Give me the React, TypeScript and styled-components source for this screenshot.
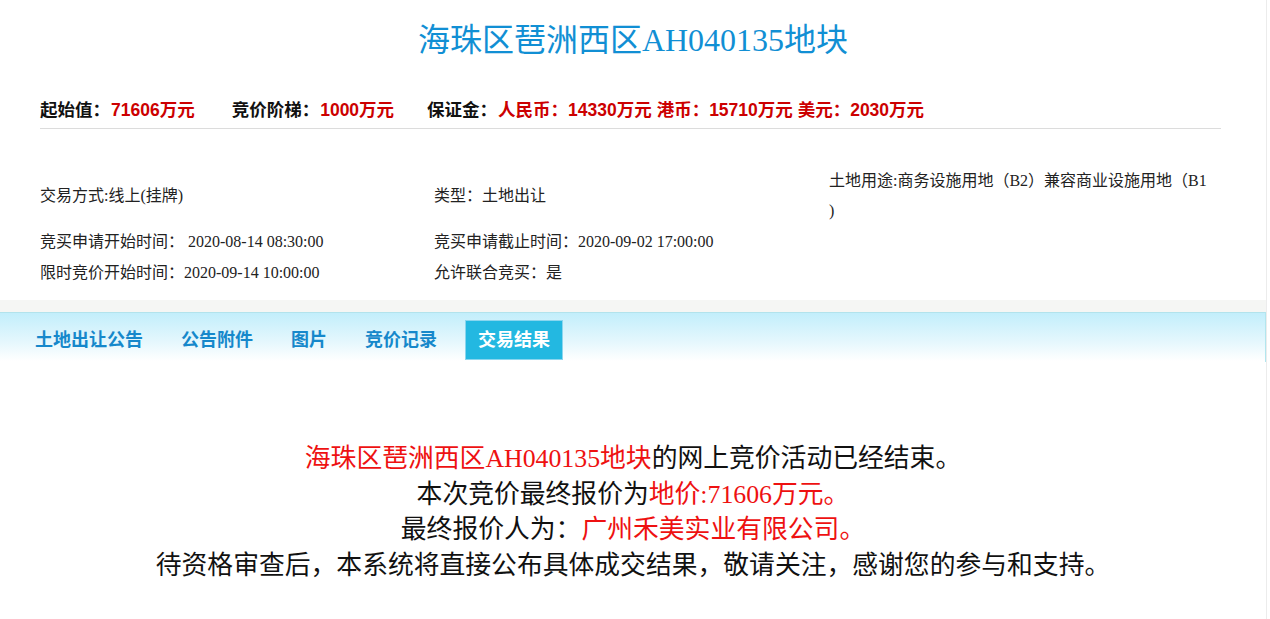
import React from "react";
import styled, { createGlobalStyle } from "styled-components";

const GlobalStyle = createGlobalStyle`
  html, body {
    margin: 0;
    padding: 0;
    background: #ffffff;
  }
  body {
    font-family: "Liberation Serif", "Noto Sans CJK SC", serif;
    color: #222;
  }
`;

const SERIF = `"Liberation Serif", "Noto Sans CJK SC", serif`;
const SANS = `"Liberation Sans", "Noto Sans CJK SC", sans-serif`;

const Page = styled.div`
  width: 1267px;
  border-right: 1px solid #ececec;
  min-height: 619px;
  box-sizing: border-box;
`;

const Title = styled.h1`
  margin: 0;
  padding-top: 16px;
  font-family: ${SERIF};
  font-size: 32px;
  line-height: 48px;
  font-weight: normal;
  color: #118fd4;
  text-align: center;
`;

const PriceRow = styled.div`
  display: flex;
  align-items: center;
  margin: 34px 45px 0 40px;
  padding-bottom: 6px;
  border-bottom: 1px solid #dcdcdc;
  font-family: ${SANS};
  font-size: 17.5px;
  line-height: 24px;
  font-weight: bold;
`;

const PriceGroup = styled.div<{ $gap?: number }>`
  display: flex;
  margin-right: ${(p) => p.$gap ?? 32}px;
`;

const PriceLabel = styled.span`
  color: #111;
  margin-right: 1px;
`;

const PriceValue = styled.span`
  color: #cc0000;
  white-space: pre;
`;

const DetailTable = styled.div`
  display: grid;
  grid-template-columns: 394px 395px 393px;
  margin: 37px 0 0 40px;
  font-family: ${SERIF};
  font-size: 16px;
  color: #222;
`;

const DetailCell = styled.div<{ $tall?: boolean }>`
  display: flex;
  align-items: center;
  height: ${(p) => (p.$tall ? "60px" : "31px")};
  line-height: 30px;
  white-space: pre;
`;

const GrayBand = styled.div`
  height: 12px;
  margin-top: 12px;
  background: #f5f6f4;
`;

const TabBar = styled.div`
  display: flex;
  align-items: flex-start;
  padding: 7px 0 0 22px;
  height: 42px;
  border-top: 1px solid #b2e3ec;
  border-right: 1px solid #b2e6ee;
  background: linear-gradient(#c2eefb 0px, #e4f7fd 28px, #ffffff 48px);
`;

const Tab = styled.div<{ $active?: boolean }>`
  height: 40px;
  line-height: 38px;
  box-sizing: border-box;
  padding: 0 12px;
  margin-right: 12px;
  margin-left: ${(p) => (p.$active ? "3px" : "0")};
  font-family: ${SANS};
  font-size: 18px;
  font-weight: 600;
  color: ${(p) => (p.$active ? "#ffffff" : "#1688cb")};
  background: ${(p) => (p.$active ? "#23b8e1" : "transparent")};
  border: 1px solid ${(p) => (p.$active ? "#8ad6ef" : "transparent")};
`;

const Result = styled.div`
  padding-top: 79px;
  text-align: center;
  font-family: ${SERIF};
  font-size: 25.8px;
  line-height: 35.7px;
  color: #111;
`;

const ResultLine = styled.div``;

const Red = styled.span`
  color: #ee1111;
`;

const tabs = ["土地出让公告", "公告附件", "图片", "竞价记录", "交易结果"];

const App = () => {
  return (
    <Page>
      <GlobalStyle />
      <Title>海珠区琶洲西区AH040135地块</Title>
      <PriceRow>
        <PriceGroup $gap={37}>
          <PriceLabel>起始值：</PriceLabel>
          <PriceValue>71606万元</PriceValue>
        </PriceGroup>
        <PriceGroup $gap={33}>
          <PriceLabel>竞价阶梯：</PriceLabel>
          <PriceValue>1000万元</PriceValue>
        </PriceGroup>
        <PriceGroup>
          <PriceLabel>保证金：</PriceLabel>
          <PriceValue>人民币：14330万元 港币：15710万元 美元：2030万元</PriceValue>
        </PriceGroup>
      </PriceRow>
      <DetailTable>
        <DetailCell $tall>交易方式:线上(挂牌)</DetailCell>
        <DetailCell $tall>类型：土地出让</DetailCell>
        <DetailCell $tall>
          <span>
            土地用途:商务设施用地（B2）兼容商业设施用地（B1
            <br />)
          </span>
        </DetailCell>
        <DetailCell>竞买申请开始时间： 2020-08-14 08:30:00</DetailCell>
        <DetailCell>竞买申请截止时间：2020-09-02 17:00:00</DetailCell>
        <DetailCell />
        <DetailCell>限时竞价开始时间：2020-09-14 10:00:00</DetailCell>
        <DetailCell>允许联合竞买：是</DetailCell>
        <DetailCell />
      </DetailTable>
      <GrayBand />
      <TabBar>
        {tabs.map((t, i) => (
          <Tab key={t} $active={i === tabs.length - 1}>
            {t}
          </Tab>
        ))}
      </TabBar>
      <Result>
        <ResultLine>
          <Red>海珠区琶洲西区AH040135地块</Red>的网上竞价活动已经结束。
        </ResultLine>
        <ResultLine>
          本次竞价最终报价为<Red>地价:71606万元。</Red>
        </ResultLine>
        <ResultLine>
          最终报价人为：<Red>广州禾美实业有限公司。</Red>
        </ResultLine>
        <ResultLine>
          待资格审查后，本系统将直接公布具体成交结果，敬请关注，感谢您的参与和支持。
        </ResultLine>
      </Result>
    </Page>
  );
};

export default App;
